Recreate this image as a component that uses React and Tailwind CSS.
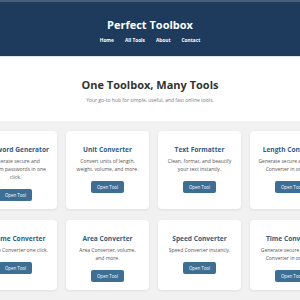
const tools = [
  { name: 'Password Generator', desc: ['Generate secure and', 'random passwords in one', 'click.'] },
  { name: 'Unit Converter', desc: ['Convert units of length,', 'weight, volume, and more.'] },
  { name: 'Text Formatter', desc: ['Clean, format, and beautify', 'your text instantly.'] },
  { name: 'Length Converter', desc: ['Generate secure and Length', 'Converter in one click.'] },
  { name: 'Volume Converter', desc: ['Volume Converter one click.'] },
  { name: 'Area Converter', desc: ['Area Converter, volume,', 'and more.'] },
  { name: 'Speed Converter', desc: ['Speed Converter instantly.'] },
  { name: 'Time Converter', desc: ['Generate secure and Time', 'Converter in one click.'] },
];

const ToolCard = ({ tool }) => (
  <div className="w-[83px] bg-white rounded-[4px] shadow-[0_1px_3px_rgba(0,0,0,0.08)] flex flex-col items-center text-center px-[4px] pt-[14px] pb-[8px]">
    <h3 className="text-[6.6px] leading-[9px] font-bold text-[#2f5d85] whitespace-nowrap">{tool.name}</h3>
    <p className="mt-[3px] text-[5px] leading-[8px] text-[#555] whitespace-nowrap">
      {tool.desc.map((line, i) => (
        <span key={i} className="block">{line}</span>
      ))}
    </p>
    <button className="mt-[8px] w-[33px] h-[12px] rounded-[2px] bg-[#3b6f96] text-white text-[4.4px] leading-[12px]">
      Open Tool
    </button>
  </div>
);

const App = () => {
  return (
    <div className="w-[300px] h-[300px] overflow-hidden bg-[#f1f1f1] font-['Open_Sans',sans-serif]">
      {/* Header */}
      <header className="h-[57px] bg-[#1e3a5c] border-t-2 border-[#4a5d76] border-b border-b-[#d8e6ef] flex flex-col items-center pt-[16px]">
        <h1 className="text-[11px] leading-[14px] font-bold text-white">Perfect Toolbox</h1>
        <nav className="mt-[4px] flex gap-[11px] text-[4.8px] leading-[8px] font-bold text-white">
          <span>Home</span>
          <span>All Tools</span>
          <span>About</span>
          <span>Contact</span>
        </nav>
      </header>

      {/* Hero */}
      <section className="h-[64px] bg-white flex flex-col items-center pt-[21px]">
        <h2 className="text-[11px] leading-[14px] font-bold text-[#333]">One Toolbox, Many Tools</h2>
        <p className="mt-[5px] text-[5px] leading-[6px] text-[#777]">Your go-to hub for simple, useful, and fast online tools.</p>
      </section>

      {/* Tools */}
      <section className="flex justify-center pl-[7px] pt-[10px]">
        <div className="grid grid-cols-[repeat(4,83px)] gap-x-[9px] gap-y-[11px] shrink-0">
          {tools.map((tool) => (
            <ToolCard key={tool.name} tool={tool} />
          ))}
        </div>
      </section>
    </div>
  );
};

export default App;
